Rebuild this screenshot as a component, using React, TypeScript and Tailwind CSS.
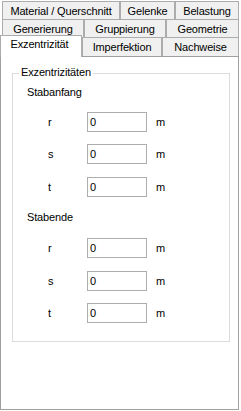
import React from "react";

const font = "font-['Liberation_Sans',Arial,sans-serif]";

function Tab({ label, w, h, cls = "" }: { label: string; w: string; h: string; cls?: string }) {
  return (
    <div
      className={`${w} ${h} ${cls} shrink-0 flex items-center justify-center border-t border-l border-r border-[#acacac] bg-[#f0f0f0] text-black leading-none`}
    >
      {label}
    </div>
  );
}

function Row({ label, value }: { label: string; value: string }) {
  return (
    <div className="flex items-center h-[20px]">
      <div className="ml-[35px] w-[39px] text-black">{label}</div>
      <div className="w-[60px] h-[20px] border border-[#adadad] bg-white flex items-center pl-[2px] text-black">
        {value}
      </div>
      <div className="ml-[9px] text-black">m</div>
    </div>
  );
}

export default function App() {
  return (
    <div className={`w-[241px] h-[411px] bg-white text-[11px] tracking-[-0.15px] ${font} relative overflow-hidden`}>
      <div className="pt-[1px]">
        {/* Row 1 */}
        <div className="flex ml-[2px]">
          <Tab label="Material / Querschnitt" w="w-[118px]" h="h-[19px]" />
          <Tab label="Gelenke" w="w-[55px]" h="h-[19px]" />
          <Tab label="Belastung" w="w-[64px]" h="h-[19px]" />
        </div>
        {/* Row 2 */}
        <div className="flex ml-[2px] -mt-[1px]">
          <Tab label="Generierung" w="w-[82px]" h="h-[19px]" />
          <Tab label="Gruppierung" w="w-[82px]" h="h-[19px]" />
          <Tab label="Geometrie" w="w-[73px]" h="h-[19px]" />
        </div>
        {/* Row 3 */}
        <div className="flex -mt-[1px] items-end h-[19px]">
          <div className="relative z-10 w-[82px] h-[22px] -mb-[1px] shrink-0 flex items-start justify-center pt-[3px] border-t border-l border-r border-[#acacac] bg-white text-black leading-none">
            <span className="-ml-[3px]">Exzentrizität</span>
          </div>
          <Tab label="Imperfektion" w="w-[80px]" h="h-[19px]" />
          <Tab label="Nachweise" w="w-[77px]" h="h-[19px]" />
        </div>
      </div>
      {/* Panel */}
      <div className="w-[239px] h-[354px] border border-[#a0a0a0] bg-white pt-[16px] pl-[11px]">
        <div className="relative w-[218px] h-[269px] border border-[#dcdcdc]">
          <div className="absolute left-[6px] -top-[8px] bg-white px-[2px] leading-[13px] text-black">
            Exzentrizitäten
          </div>
          <div className="pt-[12px] leading-[13px]">
            <div className="ml-[14px] text-black">Stabanfang</div>
            <div className="mt-[13px]">
              <Row label="r" value="0" />
            </div>
            <div className="mt-[12px]">
              <Row label="s" value="0" />
            </div>
            <div className="mt-[13px]">
              <Row label="t" value="0" />
            </div>
            <div className="ml-[14px] mt-[14px] text-black">Stabende</div>
            <div className="mt-[14px]">
              <Row label="r" value="0" />
            </div>
            <div className="mt-[13px]">
              <Row label="s" value="0" />
            </div>
            <div className="mt-[12px]">
              <Row label="t" value="0" />
            </div>
          </div>
        </div>
      </div>
    </div>
  );
}
